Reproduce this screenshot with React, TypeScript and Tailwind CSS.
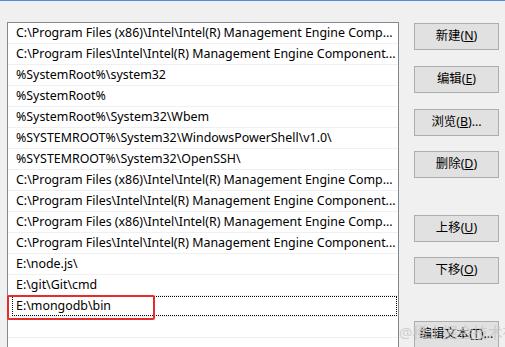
import React from 'react'

const paths = [
  'C:\\Program Files (x86)\\Intel\\Intel(R) Management Engine Comp...',
  'C:\\Program Files\\Intel\\Intel(R) Management Engine Component...',
  '%SystemRoot%\\system32',
  '%SystemRoot%',
  '%SystemRoot%\\System32\\Wbem',
  '%SYSTEMROOT%\\System32\\WindowsPowerShell\\v1.0\\',
  '%SYSTEMROOT%\\System32\\OpenSSH\\',
  'C:\\Program Files (x86)\\Intel\\Intel(R) Management Engine Comp...',
  'C:\\Program Files\\Intel\\Intel(R) Management Engine Component...',
  'C:\\Program Files (x86)\\Intel\\Intel(R) Management Engine Comp...',
  'C:\\Program Files\\Intel\\Intel(R) Management Engine Component...',
  'E:\\node.js\\',
  'E:\\git\\Git\\cmd',
  'E:\\mongodb\\bin',
  '',
  '',
]

const buttons = [
  { label: '新建', key: 'N', top: 'mt-0' },
  { label: '编辑', key: 'E', top: 'mt-[16px]' },
  { label: '浏览', key: 'B', tail: '...', top: 'mt-[16px]' },
  { label: '删除', key: 'D', top: 'mt-[15px]' },
  { label: '上移', key: 'U', top: 'mt-[37px]' },
  { label: '下移', key: 'O', top: 'mt-[15px]' },
  { label: '编辑文本', key: 'T', tail: '...', top: 'mt-[37px]' },
]

const App = () => {
  return (
    <div
      className="relative w-[505px] h-[347px] overflow-hidden bg-[#f0f0f0] border-t border-[#4a90d9] text-[12.4px] text-black"
      style={{ fontFamily: '"Noto Sans", "Noto Sans CJK SC", sans-serif' }}
    >
      <div className="flex">
        {/* Path list */}
        <div className="relative ml-[7px] mt-[21px] w-[392px] h-[340px] bg-white border border-[#828790]">
          {paths.map((p, i) => (
            <div key={i} className="h-[21px] border-b border-[#f0f0f0] flex items-center">
              <div
                className={
                  i === 13
                    ? 'ml-[4px] mr-[1px] flex-1 h-[20px] flex items-center pl-[3px] border border-dotted border-black'
                    : 'pl-[8px] whitespace-nowrap overflow-hidden'
                }
              >
                {p}
              </div>
            </div>
          ))}

          {/* Red highlight box */}
          <div className="absolute left-[-1px] top-[272px] w-[148px] h-[25px] border-2 border-[#e52b2b] rounded-[2px]" />
        </div>

        {/* Buttons */}
        <div className="ml-[15px] mt-[22px] flex flex-col">
          {buttons.map((b) => (
            <button
              key={b.key}
              className={`${b.top} w-[85px] h-[27px] shrink-0 bg-[#e1e1e1] border border-[#adadad] flex items-center justify-center`}
            >
              {b.label}(<span className="underline">{b.key}</span>){b.tail}
            </button>
          ))}
        </div>
      </div>

      {/* Watermark */}
      <div className="absolute left-[399px] top-[320px] text-[15px] text-[#c8c8c8] opacity-80 whitespace-nowrap">
        @稀土掘金技术社区
      </div>
    </div>
  )
}

export default App
